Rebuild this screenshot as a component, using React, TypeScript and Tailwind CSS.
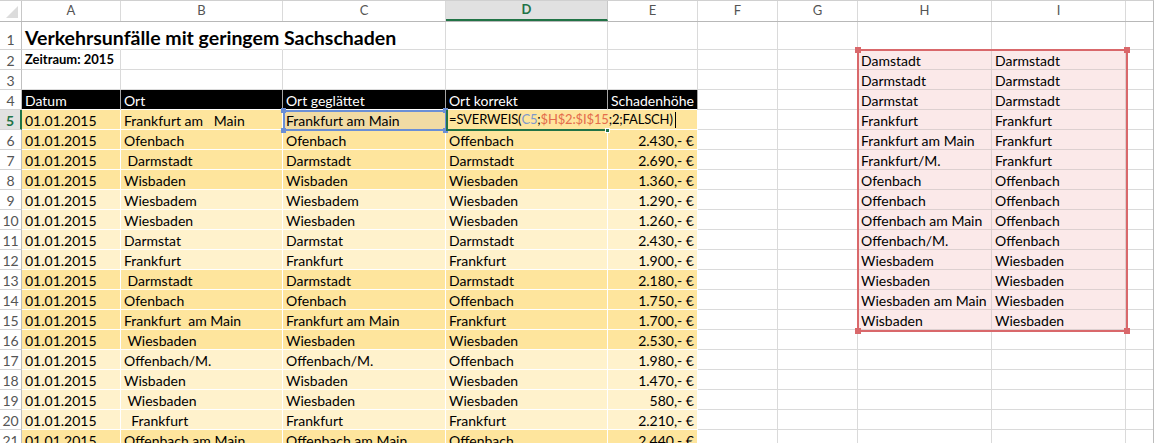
import React from "react";

const W = [
  "w-[99px]",
  "w-[162px]",
  "w-[163px]",
  "w-[162px]",
  "w-[90px]",
  "w-[80px]",
  "w-[80px]",
  "w-[134px]",
  "w-[134px]",
];
const L = ["A", "B", "C", "D", "E", "F", "G", "H", "I"];

const body: [string, string, string, string][] = [
  ["Ofenbach", "Ofenbach", "Offenbach", "2.430,- €"],
  [" Darmstadt", "Darmstadt", "Darmstadt", "2.690,- €"],
  ["Wisbaden", "Wisbaden", "Wiesbaden", "1.360,- €"],
  ["Wiesbadem", "Wiesbadem", "Wiesbaden", "1.290,- €"],
  ["Wiesbaden", "Wiesbaden", "Wiesbaden", "1.260,- €"],
  ["Darmstat", "Darmstat", "Darmstadt", "2.430,- €"],
  ["Frankfurt", "Frankfurt", "Frankfurt", "1.900,- €"],
  [" Darmstadt", "Darmstadt", "Darmstadt", "2.180,- €"],
  ["Ofenbach", "Ofenbach", "Offenbach", "1.750,- €"],
  ["Frankfurt  am Main", "Frankfurt am Main", "Frankfurt", "1.700,- €"],
  [" Wiesbaden", "Wiesbaden", "Wiesbaden", "2.530,- €"],
  ["Offenbach/M.", "Offenbach/M.", "Offenbach", "1.980,- €"],
  ["Wisbaden", "Wisbaden", "Wiesbaden", "1.470,- €"],
  [" Wiesbaden", "Wiesbaden", "Wiesbaden", "580,- €"],
  ["  Frankfurt", "Frankfurt", "Frankfurt", "2.210,- €"],
  ["Offenbach am Main", "Offenbach am Main", "Offenbach", "2.440,- €"],
];

const lookup: [string, string][] = [
  ["Damstadt", "Darmstadt"],
  ["Darmstadt", "Darmstadt"],
  ["Darmstat", "Darmstadt"],
  ["Frankfurt", "Frankfurt"],
  ["Frankfurt am Main", "Frankfurt"],
  ["Frankfurt/M.", "Frankfurt"],
  ["Ofenbach", "Offenbach"],
  ["Offenbach", "Offenbach"],
  ["Offenbach am Main", "Offenbach"],
  ["Offenbach/M.", "Offenbach"],
  ["Wiesbadem", "Wiesbaden"],
  ["Wiesbaden", "Wiesbaden"],
  ["Wiesbaden am Main", "Wiesbaden"],
  ["Wisbaden", "Wiesbaden"],
];

function isDark(n: number) {
  return (n >= 5 && n <= 8) || (n >= 13 && n <= 16) || n >= 21;
}

function cellCls(n: number, c: number): string {
  if (c <= 4) {
    if (n === 4)
      return "bg-black text-white border-r border-b border-r-[#a6a6a6] border-b-white";
    if (n >= 5) {
      if (n === 5 && c === 2) return "bg-[#f1dba4] border-r border-b border-white";
      if (n === 5 && c === 3)
        return "bg-[#fee59d] border-r border-b border-r-[#fee59d] border-b-white";
      return isDark(n)
        ? "bg-[#fee59d] border-r border-b border-white"
        : "bg-[#fff2cc] border-r border-b border-white";
    }
    if (n === 1 && c < 2) return "border-r border-b border-r-transparent border-b-[#dadada]";
    return "border-r border-b border-[#dadada]";
  }
  if ((c === 7 || c === 8) && n >= 2 && n <= 15)
    return "bg-[#fbe9e9] border-r border-b border-[#ddd0d0]";
  if (c === 9) return "border-b border-[#dadada]";
  return "border-r border-b border-[#dadada]";
}

function content(n: number, c: number): React.ReactNode {
  if (n === 1 && c === 0)
    return (
      <span className="relative z-10 pt-[3px] text-[19.5px] font-bold text-black">
        Verkehrsunfälle mit geringem Sachschaden
      </span>
    );
  if (n === 2 && c === 0)
    return <span className="relative z-10 text-[13px] font-bold text-black">Zeitraum: 2015</span>;
  if (n === 4) {
    const h = ["Datum", "Ort", "Ort geglättet", "Ort korrekt", "Schadenhöhe"];
    if (c <= 4) return h[c];
  }
  if (n === 5) {
    if (c === 0) return "01.01.2015";
    if (c === 1) return "Frankfurt am   Main";
    if (c === 2) return "Frankfurt am Main";
    if (c === 3)
      return (
        <span className="relative z-10 flex items-center text-[13px] tracking-[-0.15px]">
          =SVERWEIS(<span className="text-[#7d98cc]">C5</span>;
          <span className="text-[#e46c4b]">$H$2:$I$15</span>;2;FALSCH)
          <span className="ml-[2px] inline-block h-[16px] w-px bg-black" />
        </span>
      );
  }
  if (n >= 6) {
    const r = body[n - 6];
    if (r) {
      if (c === 0) return "01.01.2015";
      if (c >= 1 && c <= 4) return r[c - 1];
    }
  }
  if ((c === 7 || c === 8) && n >= 2 && n <= 15) return lookup[n - 2][c - 7];
  return null;
}

function Row({ n }: { n: number }) {
  const h = n === 1 ? "h-[28px]" : "h-[20px]";
  const sel = n === 5;
  return (
    <div className={`flex ${h}`}>
      <div
        className={
          sel
            ? "flex w-[22px] shrink-0 items-center justify-center border-b border-r-2 border-b-[#d4d4d4] border-r-[#217346] bg-[#e1e1e1] pt-px text-[14px] font-bold text-[#217346]"
            : "flex w-[22px] shrink-0 items-center justify-center border-b border-r border-b-[#d4d4d4] border-r-[#c0c0c0] pt-px text-[14px] text-[#555]"
        }
      >
        <span className={n === 1 ? "pt-[6px]" : ""}>{n}</span>
      </div>
      {L.map((_, c) => (
        <div
          key={c}
          className={`${W[c]} ${cellCls(n, c)} flex shrink-0 items-center whitespace-pre px-[3px] pt-px text-[14px] ${
            c === 4 && n >= 5 ? "justify-end" : ""
          }`}
        >
          {content(n, c)}
        </div>
      ))}
      <div className={`${cellCls(n, 9)} flex-1`} />
    </div>
  );
}

function Handle({ cls }: { cls: string }) {
  return <div className={`absolute ${cls}`} />;
}

export default function App() {
  const rows = Array.from({ length: 21 }, (_, i) => i + 1);
  return (
    <div className="relative h-[443px] w-[1154px] overflow-hidden bg-white font-['Lato',sans-serif] text-black">
      <div className="flex h-[22px] border-t border-b border-t-[#d0d0d0] border-b-[#b8b8b8] border-r border-r-[#bcbcbc]">
        <div className="relative w-[22px] shrink-0 border-r border-[#c8c8c8]">
          <svg className="absolute bottom-[3px] right-[3px]" width="12" height="12" viewBox="0 0 12 12">
            <polygon points="12,0 12,12 0,12" fill="#dcdcdc" />
          </svg>
        </div>
        {L.map((l, c) => (
          <div
            key={l}
            className={
              c === 3
                ? `${W[c]} flex shrink-0 items-center justify-center border-r border-b-2 border-r-[#c8c8c8] border-b-[#217346] bg-[#e1e1e1] text-[13px] font-bold text-[#217346]`
                : `${W[c]} flex shrink-0 items-center justify-center border-r border-[#dadada] text-[13px] text-[#555]`
            }
          >
            {l}
          </div>
        ))}
        <div className="flex-1" />
      </div>
      <div className="border-r border-[#bcbcbc]">
        {rows.map((n) => (
          <Row key={n} n={n} />
        ))}
      </div>

      {/* C5 reference highlight */}
      <div className="pointer-events-none absolute left-[283px] top-[110px] h-[21px] w-[164px] border-2 border-[#6b8fd6]" />
      <Handle cls="left-[281px] top-[108px] h-[5px] w-[5px] bg-[#6b8fd6]" />
      <Handle cls="left-[443px] top-[108px] h-[5px] w-[5px] bg-[#6b8fd6]" />
      <Handle cls="left-[281px] top-[128px] h-[5px] w-[5px] bg-[#6b8fd6]" />
      <Handle cls="left-[443px] top-[128px] h-[5px] w-[5px] bg-[#6b8fd6]" />

      {/* D5 active edit cell */}
      <div className="pointer-events-none absolute left-[446px] top-[110px] h-[21px] w-[162px] border-b-2 border-l-2 border-[#217346]" />
      <Handle cls="left-[605px] top-[128px] h-[5px] w-[5px] bg-[#217346] border border-white" />

      {/* H2:I15 range */}
      <div className="pointer-events-none absolute left-[857px] top-[49px] h-[283px] w-[271px] border-2 border-[#d9686b]" />
      <Handle cls="left-[855px] top-[47px] h-[6px] w-[6px] bg-[#d9686b]" />
      <Handle cls="left-[1124px] top-[47px] h-[6px] w-[6px] bg-[#d9686b]" />
      <Handle cls="left-[855px] top-[328px] h-[6px] w-[6px] bg-[#d9686b]" />
      <Handle cls="left-[1124px] top-[328px] h-[6px] w-[6px] bg-[#d9686b]" />
    </div>
  );
}
